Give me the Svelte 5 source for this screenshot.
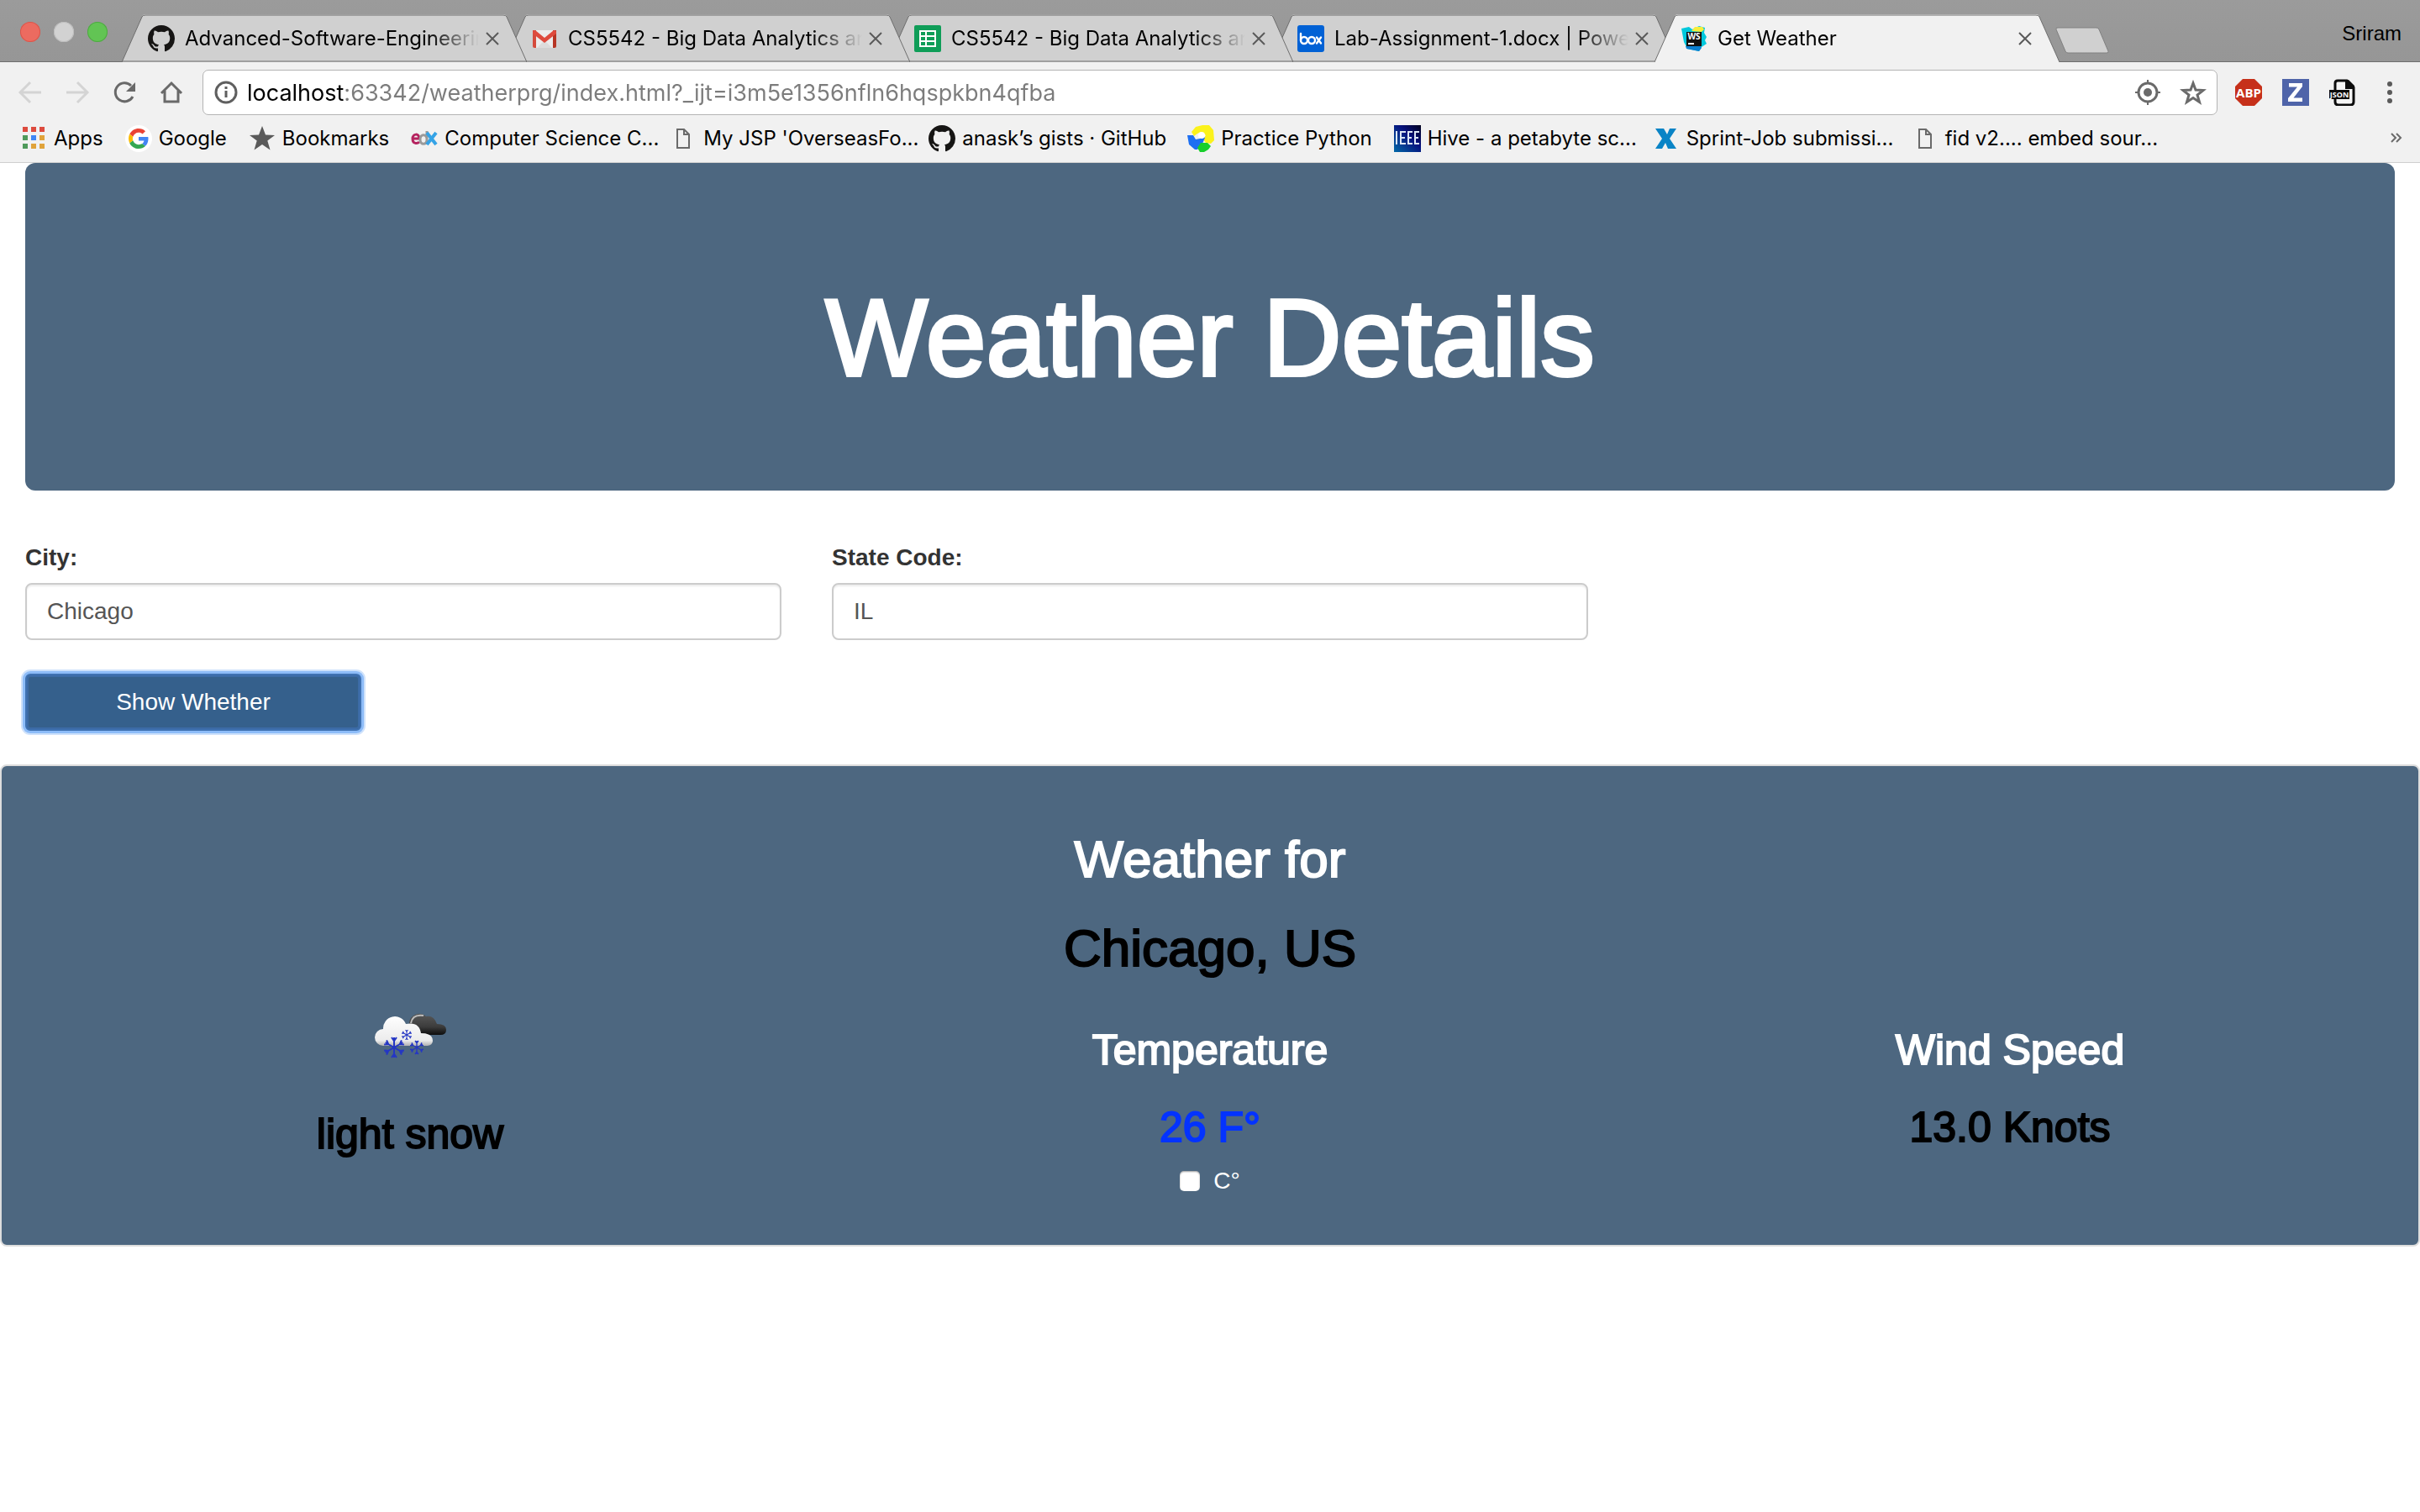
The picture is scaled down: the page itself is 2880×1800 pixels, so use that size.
<script>
  const tabs = [
    { icon: 'github', title: 'Advanced-Software-Engineering', active: false },
    { icon: 'gmail', title: 'CS5542 - Big Data Analytics and', active: false },
    { icon: 'sheets', title: 'CS5542 - Big Data Analytics and', active: false },
    { icon: 'box', title: 'Lab-Assignment-1.docx | Powered', active: false },
    { icon: 'webstorm', title: 'Get Weather', active: true }
  ];

  const bookmarks = [
    { icon: 'apps', title: 'Apps' },
    { icon: 'google', title: 'Google' },
    { icon: 'star', title: 'Bookmarks' },
    { icon: 'edx', title: 'Computer Science C...', capped: true },
    { icon: 'page', title: "My JSP 'OverseasFo...", capped: true },
    { icon: 'github', title: 'anask’s gists · GitHub', capped: true },
    { icon: 'python', title: 'Practice Python' },
    { icon: 'ieee', title: 'Hive - a petabyte sc...', capped: true },
    { icon: 'x', title: 'Sprint-Job submissi...', capped: true },
    { icon: 'page', title: 'fid v2.... embed sour...', capped: true }
  ];

  let url = $state('localhost:63342/weatherprg/index.html?_ijt=i3m5e1356nfln6hqspkbn4qfba');
  let city = $state('Chicago');
  let region = $state('IL');
  let celsius = $state(false);
</script>

{#snippet flake(x, y, r)}
  <g transform="translate({x} {y})" stroke="#2436c4" stroke-width={r / 6} fill="none">
    {#each [0, 60, 120, 180, 240, 300] as angle}
      <path transform="rotate({angle})" d="M0 0V{-r}M{-r / 4} {-r}L0 {-r * 0.65}L{r / 4} {-r}" />
    {/each}
  </g>
{/snippet}

{#snippet icon(name)}
  <svg class="icon" viewBox="0 0 32 32" aria-hidden="true">
    {#if name === 'github'}
      <path transform="scale(2)" fill="#161514" d="M8 0C3.58 0 0 3.58 0 8c0 3.54 2.29 6.53 5.47 7.59.4.07.55-.17.55-.38 0-.19-.01-.82-.01-1.49-2.01.37-2.53-.49-2.69-.94-.09-.23-.48-.94-.82-1.13-.28-.15-.68-.52-.01-.53.63-.01 1.08.58 1.23.82.72 1.21 1.87.87 2.33.66.07-.52.28-.87.51-1.07-1.78-.2-3.64-.89-3.64-3.95 0-.87.31-1.59.82-2.15-.08-.2-.36-1.02.08-2.12 0 0 .67-.21 2.2.82.64-.18 1.32-.27 2-.27s1.36.09 2 .27c1.53-1.04 2.2-.82 2.2-.82.44 1.1.16 1.92.08 2.12.51.56.82 1.27.82 2.15 0 3.07-1.87 3.75-3.65 3.95.29.25.54.73.54 1.48 0 1.07-.01 1.93-.01 2.2 0 .21.15.46.55.38A8.01 8.01 0 0 0 16 8c0-4.42-3.58-8-8-8z" />
    {:else if name === 'gmail'}
      <rect x="3" y="6" width="26" height="21" fill="#ececec" />
      <path d="M7 27 16 18l9 9z" fill="#dcdcdc" />
      <path d="M2 6h4v21H4a2 2 0 0 1-2-2z" fill="#d54b3d" />
      <path d="M30 6h-4v21h2a2 2 0 0 0 2-2z" fill="#b63524" />
      <path d="M2 8q0-2 3-2l11 9 11-9q3 0 3 2v2L16 21 2 10z" fill="#de4a3d" />
    {:else if name === 'sheets'}
      <rect width="32" height="32" rx="2" fill="#0f9d58" />
      <path fill="#fff" fill-rule="evenodd" d="M6 6h20v20H6zM8 8v4h5V8zM15 8v4h9V8zM8 14v4h5v-4zM15 14v4h9v-4zM8 20v4h5v-4zM15 20v4h9v-4z" />
    {:else if name === 'box'}
      <rect width="32" height="32" rx="3" fill="#0061d5" />
      <g fill="none" stroke="#fff" stroke-width="2.4" stroke-linecap="round">
        <path d="M4 10v8" />
        <circle cx="8" cy="18" r="4" />
        <circle cx="17" cy="18" r="4" />
        <path d="m23 14.500 5 7m0-7-5 7" />
      </g>
    {:else if name === 'webstorm'}
      <path d="M1 4 10 2l4 3 8-4 7 2-1 6 3 5-2 4 2 4-6 4-3 5-14-3L4 20z" fill="#00c8dc" />
      <path d="M13 7 17 2l9 0 2 3-3 3z" fill="#f6ee3a" />
      <path d="m6 25 17-1 2 3-3 4-15-3z" fill="#0a7fd0" />
      <rect x="7" y="8" width="18" height="17" fill="#111" />
      <text x="16" y="17" class="glyph" font-size="10" fill="#fff">WS</text>
      <rect x="9" y="21" width="7" height="2" fill="#fff" />
    {:else if name === 'apps'}
      {#each ['#dd4b3e', '#dd4b3e', '#dd4b3e', '#4f9a5b', '#3f87f5', '#e0a33a', '#4f9a5b', '#e0a33a', '#e0a33a'] as tint, i}
        <rect x={3 + (i % 3) * 10} y={2 + Math.floor(i / 3) * 10} width="6" height="6" fill={tint} />
      {/each}
    {:else if name === 'google'}
      <circle cx="16" cy="16" r="16" fill="#fff" />
      <g transform="translate(4 4) scale(.5)">
        <path fill="#ea4335" d="M24 9.500c3.540 0 6.710 1.220 9.210 3.600l6.850-6.850C35.900 2.380 30.470 0 24 0 14.620 0 6.510 5.380 2.560 13.220l7.980 6.190C12.430 13.720 17.740 9.500 24 9.500z" />
        <path fill="#4285f4" d="M46.980 24.550c0-1.570-.15-3.090-.38-4.550H24v9.020h12.940c-.58 2.960-2.260 5.480-4.780 7.180l7.730 6c4.510-4.180 7.090-10.360 7.090-17.650z" />
        <path fill="#fbbc05" d="M10.530 28.590c-.48-1.450-.76-2.990-.76-4.590s.27-3.140.76-4.590l-7.980-6.190C.92 16.460 0 20.120 0 24c0 3.880.92 7.540 2.560 10.780l7.970-6.190z" />
        <path fill="#34a853" d="M24 48c6.480 0 11.930-2.130 15.890-5.810l-7.730-6c-2.150 1.450-4.920 2.300-8.160 2.300-6.260 0-11.570-4.220-13.470-9.910l-7.980 6.190C6.510 42.620 14.620 48 24 48z" />
      </g>
    {:else if name === 'star'}
      <path fill="#5a5a5a" d="m16 1 4 10.500 11 .5-8.700 6.500 3.200 11L16 23l-9.500 6.500 3.200-11L1 12l11-.5z" />
    {:else if name === 'edx'}
      <g fill="none" stroke-width="4">
        <path d="M2 16h8c0-7-8-6-8 0 0 7 6 6 8 4" stroke="#b5235f" stroke-width="3" />
        <path d="M19 7v16M19 17c0-7-8-7-8 0s8 7 8 0" stroke="#9a9a9a" stroke-width="3" />
        <path d="m19 9 11 14M30 9 19 23" stroke="#35a3e6" />
      </g>
    {:else if name === 'page'}
      <path d="M9 5h8l6 6v16H9zM17 5v6h6" fill="none" stroke="#6a6a6a" stroke-width="2" />
    {:else if name === 'python'}
      <path d="M5 8 10 2 18 0h8l5 6 1 12-4 4-6-1-3-4 3-5-5-4-5 2-4 3z" fill="#fbf21c" />
      <path d="M0 12h7l3 5 5-1 3-4 3 3-3 7-3 3-3 4H9L2 23z" fill="#1c6ff2" />
      <path d="m12 27 4-6h8l4 4-3 4-5 3h-5z" fill="#17cf2b" />
      <circle cx="17" cy="12" r="4" fill="#fff" />
    {:else if name === 'ieee'}
      <linearGradient id="ieee-bg" x1="0" y1="1" x2="1" y2="0">
        <stop offset="0" stop-color="#0369a8" />
        <stop offset=".6" stop-color="#06107c" />
        <stop offset="1" stop-color="#00001c" />
      </linearGradient>
      <rect width="32" height="32" fill="url(#ieee-bg)" />
      <path d="M3 7v16M14 8H8v14h6M8 15h5M22 8h-5v14h5M17 15h4M30 8h-5v14h5M25 15h4" fill="none" stroke="#dce6f5" stroke-width="2" />
    {:else if name === 'x'}
      <path d="M3 4h10l4 7 3-7h8l-8 12 8 12H18l-3-7-4 7H3l8-12z" fill="#0a84c6" />
    {:else if name === 'back'}
      <path d="M29 16H5M16 4 4 16l12 12" fill="none" stroke="#d4d4d4" stroke-width="3" />
    {:else if name === 'forward'}
      <path d="M3 16h24M16 4l12 12-12 12" fill="none" stroke="#d4d4d4" stroke-width="3" />
    {:else if name === 'reload'}
      <path d="M26 21A11 11 0 1 1 24 8" fill="none" stroke="#696969" stroke-width="3" />
      <path d="M29 4v11H18z" fill="#696969" />
    {:else if name === 'home'}
      <path d="M4 17 16 5l12 12M8 14v13h16V14" fill="none" stroke="#696969" stroke-width="3" />
    {:else if name === 'info'}
      <circle cx="16" cy="16" r="12" fill="none" stroke="#5f5f5f" stroke-width="3" />
      <path d="M16 14v8M16 9v3" stroke="#5f5f5f" stroke-width="3" />
    {:else if name === 'locate'}
      <circle cx="16" cy="16" r="11" fill="none" stroke="#6a6a6a" stroke-width="3" />
      <circle cx="16" cy="16" r="5" fill="#6a6a6a" />
      <path d="M16 1v5M16 26v5M1 16h5M26 16h5" stroke="#6a6a6a" stroke-width="2" />
    {:else if name === 'favorite'}
      <path d="m16 5 3 8 9 .5-7 5.500 2.500 8.500L16 22.500l-7.500 5L11 19l-7-5.500 9-.5z" fill="none" stroke="#6a6a6a" stroke-width="3" />
    {:else if name === 'abp'}
      <path d="M9 0h14l9 9v14l-9 9H9l-9-9V9z" fill="#c6301a" />
      <text x="16" y="22" class="glyph" font-size="15" fill="#fff">ABP</text>
    {:else if name === 'zotero'}
      <rect width="32" height="32" fill="#4f64a9" />
      <path d="M8 5h16v4L13.500 22.500H24V27H7v-4L18 9.500H8z" fill="#fff" />
    {:else if name === 'json'}
      <path d="M10 2h11l8 8v17q0 4-4 4H11q-4 0-4-4V5q0-3 3-3z" fill="#f5f5f5" stroke="#0c0c0c" stroke-width="3" />
      <path d="M19 1h4l7 7v4H19z" fill="#0c0c0c" />
      <rect y="13" width="24" height="11" fill="#0c0c0c" />
      <text x="12" y="22" class="glyph" font-size="9" fill="#fff">JSON</text>
    {:else if name === 'menu'}
      <circle cx="16" cy="6" r="3" fill="#5a5a5a" />
      <circle cx="16" cy="16" r="3" fill="#5a5a5a" />
      <circle cx="16" cy="26" r="3" fill="#5a5a5a" />
    {:else if name === 'more'}
      <path d="m11 10 5 5-5 5M17 10l5 5-5 5" fill="none" stroke="#6a6a6a" stroke-width="2" />
    {/if}
  </svg>
{/snippet}

<div class="browser">
  <div class="strip">
    <div class="lights">
      <button class="light red" aria-label="Close window"></button>
      <button class="light gray" aria-label="Minimize window"></button>
      <button class="light green" aria-label="Zoom window"></button>
    </div>
    <div class="tabs">
      {#each tabs as tab, i}
        <div class="tab" class:active={tab.active} style:z-index={tab.active ? 10 : 9 - i}>
          <svg class="shape" viewBox="0 0 482 57" preserveAspectRatio="none" aria-hidden="true">
            <path class="fill" d="M0 57 24 3Q25 0 28 0H454Q457 0 458 3L482 57z" />
            <path class="edge" d="M0 57 24 3Q25 1 28 1H454Q457 1 458 3L482 57" />
            {#if !tab.active}<path class="edge" d="M0 56H482" />{/if}
          </svg>
          {@render icon(tab.icon)}
          <span class="title">{tab.title}</span>
          <button class="close" aria-label="Close tab">
            <svg viewBox="0 0 16 16" aria-hidden="true"><path d="m1 1 14 14M15 1 1 15" fill="none" stroke="#5a5a5a" stroke-width="2" /></svg>
          </button>
        </div>
      {/each}
    </div>
    <button class="new-tab" aria-label="New tab">
      <svg viewBox="0 0 64 32" aria-hidden="true"><path d="M3 1h46q2 0 3 2l11 26q1 2-2 2H15q-2 0-3-2L1 3q-1-2 2-2z" fill="#d0d0d0" stroke="#808080" /></svg>
    </button>
    <span class="profile">Sriram</span>
  </div>

  <div class="toolbar">
    <button class="tool" aria-label="Back">{@render icon('back')}</button>
    <button class="tool" aria-label="Forward">{@render icon('forward')}</button>
    <button class="tool" aria-label="Reload">{@render icon('reload')}</button>
    <button class="tool" aria-label="Home">{@render icon('home')}</button>
    <div class="omnibox">
      {@render icon('info')}
      <input class="url" aria-label="Address" bind:value={url} />
      <button class="tool" aria-label="Location">{@render icon('locate')}</button>
      <button class="tool" aria-label="Bookmark this page">{@render icon('favorite')}</button>
    </div>
    <button class="tool" aria-label="Adblock Plus">{@render icon('abp')}</button>
    <button class="tool" aria-label="Zotero">{@render icon('zotero')}</button>
    <button class="tool" aria-label="JSON viewer">{@render icon('json')}</button>
    <button class="tool" aria-label="Menu">{@render icon('menu')}</button>
  </div>

  <nav class="bookmarks">
    {#each bookmarks as mark}
      <a href="#bookmark" class:capped={mark.capped}>{@render icon(mark.icon)}<span>{mark.title}</span></a>
    {/each}
    <button class="tool more" aria-label="More bookmarks">{@render icon('more')}</button>
  </nav>
</div>

<main>
  <header class="banner"><h1>Weather Details</h1></header>

  <form class="search" onsubmit={(e) => e.preventDefault()}>
    <div class="fields">
      <div class="field">
        <label for="city">City:</label>
        <input id="city" type="text" bind:value={city} />
      </div>
      <div class="field">
        <label for="state">State Code:</label>
        <input id="state" type="text" bind:value={region} />
      </div>
    </div>
    <button class="submit" type="submit">Show Whether</button>
  </form>

  <section class="panel">
    <h2>Weather for</h2>
    <h2 class="dark">Chicago, US</h2>
    <div class="columns">
      <div class="column">
        <svg class="sky" viewBox="1 2 100 100" role="img" aria-label="light snow">
          <defs>
            <linearGradient id="cloud-dark" x1="0" y1="24" x2="0" y2="51" gradientUnits="userSpaceOnUse">
              <stop offset="0" stop-color="#5a5a5a" />
              <stop offset=".6" stop-color="#3c3c3c" />
              <stop offset="1" stop-color="#080808" />
            </linearGradient>
            <linearGradient id="cloud-light" x1="0" y1="27" x2="0" y2="64" gradientUnits="userSpaceOnUse">
              <stop offset="0" stop-color="#fff" />
              <stop offset=".8" stop-color="#ececec" />
              <stop offset="1" stop-color="#a8a8a8" />
            </linearGradient>
          </defs>
          <path d="M50 50V36a12 12 0 0 1 20-8q9-2 13 9 11 0 11 7 0 6-7 6z" fill="url(#cloud-dark)" />
          <path d="M52 36q2-11 15-9" fill="none" stroke="#bdbdbd" stroke-width="2" />
          <path d="M19 63a10 10 0 0 1 0-20 14 14 0 0 1 27-6q16-3 18 11 14 0 14 9 0 6-8 6z" fill="url(#cloud-light)" />
          {@render flake(32, 65, 12)}
          {@render flake(47, 50, 6)}
          {@render flake(59, 65, 8)}
        </svg>
        <h3 class="dark">light snow</h3>
      </div>
      <div class="column reading">
        <h3>Temperature</h3>
        <h3 class="cold">26 F°</h3>
        <label class="unit"><input type="checkbox" bind:checked={celsius} />C°</label>
      </div>
      <div class="column reading">
        <h3>Wind Speed</h3>
        <h3 class="dark">13.0 Knots</h3>
      </div>
    </div>
  </section>
</main>

<style>
  :global(body) {
    background: #fff;
  }
  button,
  input {
    font: inherit;
    margin: 0;
    padding: 0;
    border: 0;
    box-sizing: border-box;
  }
  button {
    background: none;
  }
  h1,
  h2,
  h3 {
    margin: 0;
    font-weight: 400;
  }
  .icon {
    display: block;
    flex: none;
    width: 32px;
    height: 32px;
  }
  .glyph {
    font-family: 'Open Sans', sans-serif;
    font-weight: 700;
    text-anchor: middle;
  }

  .browser {
    background: #f1f1f1;
    border-bottom: 1px solid #cfcfcf;
    font-family: Inter, sans-serif;
    font-size: 24px;
    line-height: 32px;
    color: #000;
  }
  .strip {
    display: flex;
    height: 74px;
    background: linear-gradient(#9b9b9b, #969696);
    box-shadow: inset 0 -1px #6e6e6e;
  }
  .lights {
    display: flex;
    gap: 16px;
    padding: 26px 17px 0 24px;
  }
  .light {
    width: 24px;
    height: 24px;
    border-radius: 50%;
  }
  .red {
    background: #ec6b60;
    box-shadow: inset 0 0 0 1px #d9564b;
  }
  .gray {
    background: #d2d2d2;
    box-shadow: inset 0 0 0 1px #bdbdbd;
  }
  .green {
    background: #62c454;
    box-shadow: inset 0 0 0 1px #4fa843;
  }
  .tabs {
    display: flex;
    flex: 0 1 auto;
    min-width: 0;
    padding-top: 17px;
  }
  .tab {
    position: relative;
    display: flex;
    align-items: center;
    box-sizing: border-box;
    flex: 0 1 482px;
    width: 482px;
    min-width: 0;
    height: 57px;
    padding: 0 33px 0 31px;
  }
  .tab + .tab {
    margin-left: -26px;
  }
  .shape {
    position: absolute;
    inset: 0;
    z-index: -1;
    width: 100%;
    height: 100%;
  }
  .fill {
    fill: #d0d0d0;
  }
  .active .fill {
    fill: #f1f1f1;
  }
  .edge {
    fill: none;
    stroke: #6e6e6e;
    vector-effect: non-scaling-stroke;
  }
  .title {
    flex: 1;
    min-width: 0;
    margin: 0 8px 0 12px;
    overflow: hidden;
    white-space: nowrap;
    mask-image: linear-gradient(90deg, #000 calc(100% - 60px), transparent);
  }
  .close {
    flex: none;
    width: 16px;
    height: 16px;
  }
  .close svg,
  .new-tab svg {
    display: block;
    width: 100%;
  }
  .new-tab {
    flex: none;
    width: 64px;
    height: 32px;
    margin: 32px auto 0 -5px;
  }
  .profile {
    padding: 24px 22px 0 0;
    font-family: 'Liberation Sans', sans-serif;
  }

  .toolbar {
    display: flex;
    align-items: center;
    gap: 24px;
    padding: 9px 20px 0;
  }
  .tool {
    flex: none;
    width: 32px;
    height: 32px;
  }
  .omnibox {
    display: flex;
    align-items: center;
    flex: 1;
    box-sizing: border-box;
    height: 54px;
    gap: 22px;
    margin: 0 -3px;
    padding: 0 12px 0 11px;
    border: 1px solid #b4b4b4;
    border-radius: 7px;
    background: #fff;
  }
  .url {
    flex: 1;
    min-width: 0;
    height: 40px;
    margin-left: -13px;
    font-size: 27px;
    color: transparent;
    background: linear-gradient(90deg, #000 116px, #7c7c7c 116px);
    background-clip: text;
    -webkit-background-clip: text;
  }
  .bookmarks {
    display: flex;
    align-items: center;
    gap: 26px;
    height: 56px;
    padding: 0 13px 0 24px;
  }
  .bookmarks a {
    display: flex;
    align-items: center;
    gap: 8px;
    color: #000;
    text-decoration: none;
    white-space: nowrap;
  }
  .bookmarks .capped {
    width: 282px;
  }
  .more {
    margin-left: auto;
  }

  main {
    font-family: 'Liberation Sans', Arial, sans-serif;
    font-size: 28px;
    line-height: 40px;
    color: #333;
  }
  .banner {
    margin: 0 30px;
    padding: 138px 30px 112px;
    border-radius: 12px;
    background: #4d6780;
    color: #fff;
    text-align: center;
  }
  h1 {
    font-size: 129px;
    line-height: 140px;
    -webkit-text-stroke: 4px currentColor;
  }
  .search {
    padding: 60px 0 40px;
  }
  .fields {
    display: grid;
    grid-template-columns: repeat(3, 1fr);
    margin-bottom: 40px;
  }
  .field {
    display: grid;
    gap: 10px;
    padding: 0 30px;
  }
  .field label {
    font-weight: 700;
  }
  .field input {
    width: 100%;
    height: 68px;
    padding: 0 24px;
    border: 2px solid #ccc;
    border-radius: 8px;
    background: #fff;
    box-shadow: inset 0 2px 2px rgba(0, 0, 0, 0.075);
    color: #555;
  }
  .submit {
    display: block;
    width: 400px;
    height: 68px;
    margin-left: 30px;
    border: 2px solid #3f72b2;
    border-radius: 6px;
    background: #35608c;
    box-shadow:
      inset 0 0 0 2px #3c6ba6,
      0 0 0 3px #8dbcf8,
      0 0 0 5px #cfe2fb;
    color: #fff;
  }
  .panel {
    padding: 78px 10px 56px;
    border: 2px solid #ddd;
    border-radius: 8px;
    background: #4d6780;
    color: #fff;
    text-align: center;
  }
  h2 {
    font-size: 62px;
    line-height: 66px;
    -webkit-text-stroke: 2px currentColor;
  }
  h2 + h2 {
    margin-top: 40px;
  }
  .columns {
    display: grid;
    grid-template-columns: repeat(3, 1fr);
    margin-top: 22px;
  }
  .column {
    display: flex;
    flex-direction: column;
    align-items: center;
    gap: 40px;
  }
  .reading {
    padding-top: 40px;
  }
  h3 {
    font-size: 50px;
    line-height: 52px;
    -webkit-text-stroke: 2px currentColor;
  }
  .dark {
    color: #000;
  }
  .cold {
    color: #0433ff;
  }
  .sky {
    display: block;
    width: 100px;
    height: 100px;
  }
  .unit {
    display: flex;
    align-items: center;
    gap: 16px;
    margin-top: -22px;
  }
  .unit input {
    appearance: none;
    width: 24px;
    height: 24px;
    border-radius: 5px;
    background: #fff;
    box-shadow: inset 0 1px 2px rgba(0, 0, 0, 0.4);
  }
</style>
